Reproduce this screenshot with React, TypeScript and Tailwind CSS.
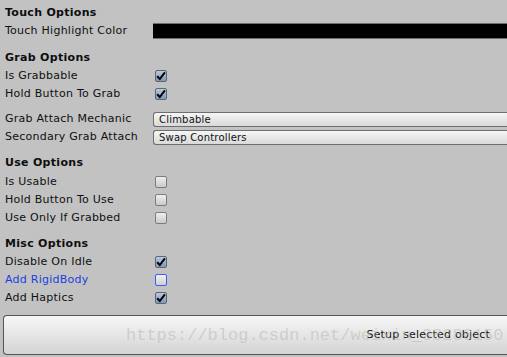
import type { ReactNode } from 'react'

const FONT = { fontFamily: '"DejaVu Sans", Verdana, sans-serif' }

function Heading({ children }: { children: ReactNode }) {
  return (
    <div className="flex h-[18px] items-center pl-[5px] text-[11px] font-bold tracking-[0.3px] text-[#0e0e0e]">
      {children}
    </div>
  )
}

function Row({
  label,
  blue,
  children,
}: {
  label: string
  blue?: boolean
  children: ReactNode
}) {
  return (
    <div className="flex h-[18px] items-center">
      <div
        className={
          blue
            ? 'w-[153px] shrink-0 pl-[5px] text-[11px] tracking-[0.25px] text-[#1a3fe0]'
            : 'w-[153px] shrink-0 pl-[5px] text-[11px] tracking-[0.25px] text-[#101010]'
        }
      >
        {label}
      </div>
      <div className="flex flex-1 items-center">{children}</div>
    </div>
  )
}

function Checkbox({ checked, blue }: { checked?: boolean; blue?: boolean }) {
  const base = 'ml-[2px] flex h-[12px] w-[12px] items-center justify-center rounded-[2px] border'
  const tone = checked
    ? 'border-[#5f6670] bg-gradient-to-b from-[#b8c8de] to-[#7f98bc]'
    : blue
      ? 'border-[#3b5cf0] bg-gradient-to-b from-[#f2f2f2] to-[#cfcfcf]'
      : 'border-[#7c7c7c] bg-gradient-to-b from-[#f0f0f0] to-[#c9c9c9]'
  return (
    <div className={`${base} ${tone}`}>
      {checked && (
        <svg width="10" height="10" viewBox="0 0 10 10">
          <path d="M1.2 5.2 L3.8 8 L8.9 1.3" fill="none" stroke="#000" strokeWidth="2" />
        </svg>
      )}
    </div>
  )
}

function Dropdown({ value }: { value: string }) {
  return (
    <div className="flex h-[15px] flex-1 items-center rounded-l-[3px] border border-r-0 border-[#6e6e6e] bg-gradient-to-b from-[#f6f6f6] to-[#d9d9d9] pl-[5px] text-[10px] tracking-[0.2px] text-[#111]">
      {value}
    </div>
  )
}

export default function App() {
  return (
    <div
      className="relative h-[357px] w-[507px] overflow-hidden bg-[#c2c2c2] pt-[4px]"
      style={FONT}
    >
      <Heading>Touch Options</Heading>
      <Row label="Touch Highlight Color">
        <div className="h-[16px] flex-1 border-y border-[#6e6e6e] bg-black" />
      </Row>

      <div className="mt-[9px]">
        <Heading>Grab Options</Heading>
        <Row label="Is Grabbable">
          <Checkbox checked />
        </Row>
        <Row label="Hold Button To Grab">
          <Checkbox checked />
        </Row>
      </div>

      <div className="mt-[7px]">
        <Row label="Grab Attach Mechanic">
          <Dropdown value="Climbable" />
        </Row>
        <Row label="Secondary Grab Attach">
          <Dropdown value="Swap Controllers" />
        </Row>
      </div>

      <div className="mt-[8px]">
        <Heading>Use Options</Heading>
        <div className="mt-px">
          <Row label="Is Usable">
            <Checkbox />
          </Row>
          <Row label="Hold Button To Use">
            <Checkbox />
          </Row>
          <Row label="Use Only If Grabbed">
            <Checkbox />
          </Row>
        </div>
      </div>

      <div className="mt-[8px]">
        <Heading>Misc Options</Heading>
        <Row label="Disable On Idle">
          <Checkbox checked />
        </Row>
        <Row label="Add RigidBody" blue>
          <Checkbox blue />
        </Row>
        <Row label="Add Haptics">
          <Checkbox checked />
        </Row>
      </div>

      <div className="ml-[3px] mt-[8px] flex h-[40px] items-center justify-end rounded-l-[4px] border border-r-0 border-[#555] bg-gradient-to-b from-[#f7f7f7] to-[#d4d4d4] pr-[17px] text-[11px] tracking-[0.2px] text-[#111]">
        Setup selected object
      </div>

      {/* csdn watermark */}
      <div
        className="pointer-events-none absolute left-[126px] top-[325px] whitespace-nowrap text-[17px] leading-[22px] text-[#b5b5aa]/50"
        style={{ fontFamily: '"Liberation Mono", monospace' }}
      >
        https://blog.csdn.net/weixin_38280150
      </div>
    </div>
  )
}
